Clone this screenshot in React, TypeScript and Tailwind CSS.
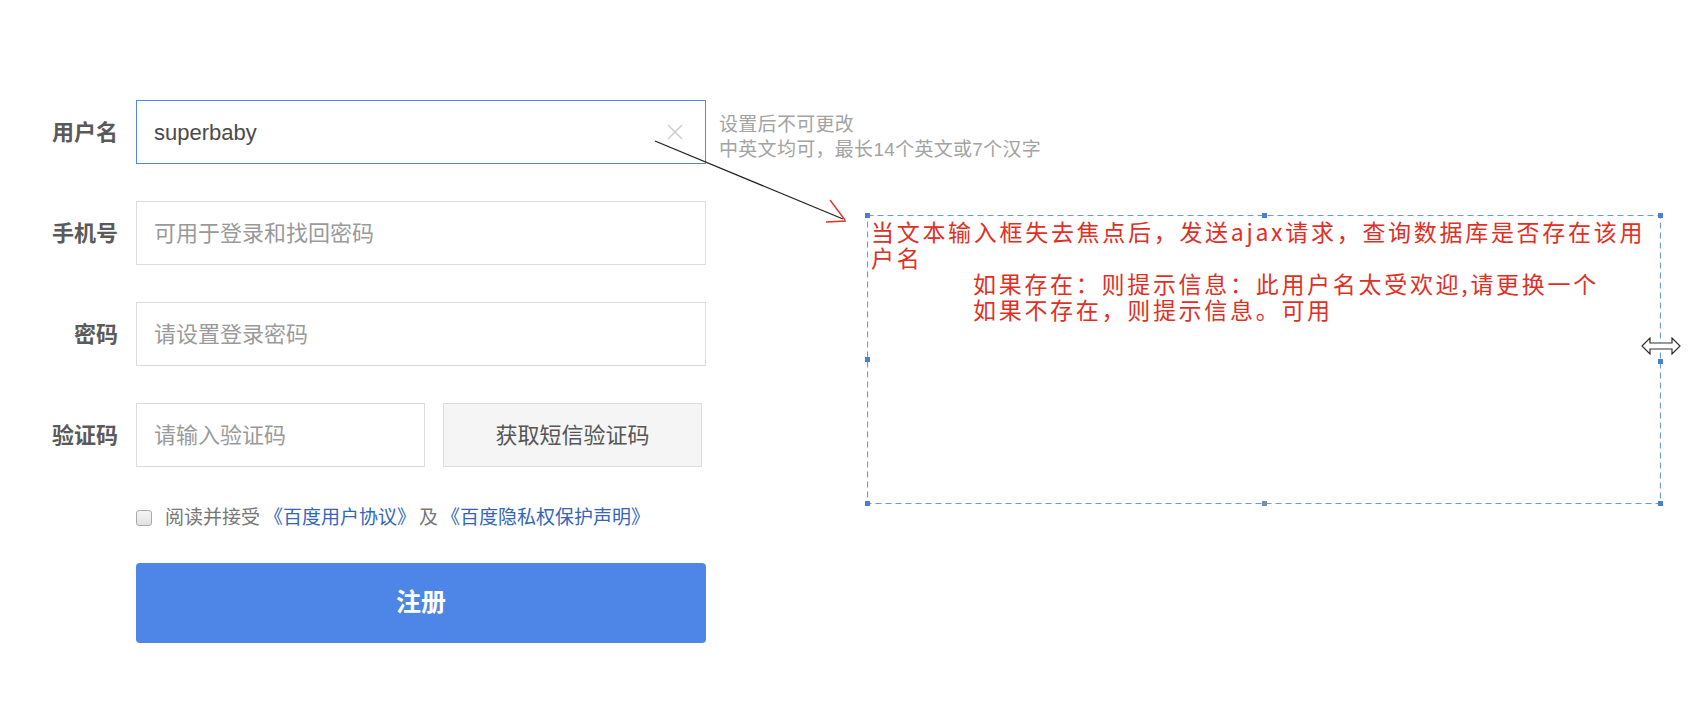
import React from "react";

function Label({ text }: { text: string }) {
  return (
    <div className="w-[68px] h-[64px] flex items-center justify-end text-[22px] font-bold text-[#5a5a5a] whitespace-nowrap">
      {text}
    </div>
  );
}

function Field({ placeholder, width = "w-[570px]" }: { placeholder: string; width?: string }) {
  return (
    <div className={`${width} h-[64px] border border-[#dcdcdc] bg-white flex items-center pl-[17px] text-[22px] text-[#9a9a9a] whitespace-nowrap`}>
      {placeholder}
    </div>
  );
}

export default function App() {
  return (
    <div className="relative w-[1701px] h-[720px] bg-white overflow-hidden font-['Liberation_Sans','Noto_Sans_CJK_SC',sans-serif]">
      <div className="flex pl-[50px] pt-[100px]">
        {/* form column */}
        <div className="w-[656px] flex flex-col">
          {/* username */}
          <div className="flex items-center gap-[18px]">
            <Label text="用户名" />
            <div className="w-[570px] h-[64px] border border-[#5189dc] bg-white flex items-center justify-between pl-[17px] pr-[20px] text-[22px] text-[#4a4a4a]">
              <span>superbaby</span>
              <svg width="20" height="20" viewBox="0 0 20 20">
                <path d="M3 3 L17 17 M17 3 L3 17" stroke="#cfcfcf" strokeWidth="1.6" fill="none" />
              </svg>
            </div>
          </div>
          {/* phone */}
          <div className="flex items-center gap-[18px] mt-[37px]">
            <Label text="手机号" />
            <Field placeholder="可用于登录和找回密码" />
          </div>
          {/* password */}
          <div className="flex items-center gap-[18px] mt-[37px]">
            <Label text="密码" />
            <Field placeholder="请设置登录密码" />
          </div>
          {/* verify */}
          <div className="flex items-center gap-[18px] mt-[37px]">
            <Label text="验证码" />
            <div className="flex items-center gap-[18px]">
              <Field placeholder="请输入验证码" width="w-[289px]" />
              <div className="w-[259px] h-[64px] border border-[#dcdcdc] bg-[#f5f5f5] flex items-center justify-center text-[22px] text-[#555]">
                获取短信验证码
              </div>
            </div>
          </div>
          {/* agreement */}
          <div className="flex items-center h-[24px] mt-[39px] pl-[86px] text-[19px] text-[#777] whitespace-nowrap">
            <div className="w-[16px] h-[16px] rounded-[3px] border border-[#a9a9a9] bg-gradient-to-b from-[#f4f4f4] to-[#e2e2e2] mr-[13px]" />
            <span>阅读并接受</span>
            <span className="text-[#3366bb] ml-[4px]">《百度用户协议》</span>
            <span className="mx-[3px]">及</span>
            <span className="text-[#3366bb]">《百度隐私权保护声明》</span>
          </div>
          {/* submit */}
          <div className="ml-[86px] mt-[33px] w-[570px] h-[80px] rounded-[4px] bg-[#4d86e6] flex items-center justify-center text-[25px] font-bold text-white">
            注册
          </div>
        </div>

        {/* right column */}
        <div className="ml-[13px] flex flex-col">
          <div className="mt-[12px] text-[19px] leading-[25px] tracking-[0.3px] text-[#a3a3a3] whitespace-nowrap">
            <div>设置后不可更改</div>
            <div>中英文均可，最长14个英文或7个汉字</div>
          </div>

          {/* annotation box */}
          <div className="relative ml-[148px] mt-[53px] w-[794px] h-[289px] pt-[3px] pl-[4px] text-[23px] leading-[26px] tracking-[2.7px] text-[#e12f26] font-['Noto_Sans_CJK_SC',sans-serif] whitespace-nowrap">
            <svg className="absolute inset-0 pointer-events-none" width="794" height="289">
              <rect x="0.5" y="0.5" width="793" height="288" fill="none" stroke="#6b9ae0" strokeWidth="1.2" strokeDasharray="6 4" />
            </svg>
            <div>当文本输入框失去焦点后，发送ajax请求，查询数据库是否存在该用</div>
            <div>户名</div>
            <div className="pl-[102px]">如果存在：则提示信息：此用户名太受欢迎,请更换一个</div>
            <div className="pl-[102px]">如果不存在，则提示信息。可用</div>
            {/* handles */}
            <div className="absolute left-[-2px] top-[-2px] w-[5px] h-[5px] bg-[#4a7fd4]" />
            <div className="absolute left-[395px] top-[-2px] w-[5px] h-[5px] bg-[#4a7fd4]" />
            <div className="absolute right-[-2px] top-[-2px] w-[5px] h-[5px] bg-[#4a7fd4]" />
            <div className="absolute left-[-2px] top-[142px] w-[5px] h-[5px] bg-[#4a7fd4]" />
            <div className="absolute right-[-2px] top-[144px] w-[5px] h-[5px] bg-[#4a7fd4]" />
            <div className="absolute left-[-2px] bottom-[-2px] w-[5px] h-[5px] bg-[#4a7fd4]" />
            <div className="absolute left-[395px] bottom-[-2px] w-[5px] h-[5px] bg-[#7a8fb0]" />
            <div className="absolute right-[-2px] bottom-[-2px] w-[5px] h-[5px] bg-[#4a7fd4]" />
            {/* resize cursor */}
            <svg className="absolute right-[-20px] top-[122px]" width="40" height="18" viewBox="0 0 40 18">
              <path d="M1 9 L9 1 L9 6 L31 6 L31 1 L39 9 L31 17 L31 12 L9 12 L9 17 Z" fill="#ffffff" stroke="#333" strokeWidth="1.2" strokeLinejoin="miter" />
            </svg>
          </div>
        </div>
      </div>

      {/* annotation arrow */}
      <svg className="absolute inset-0 pointer-events-none" width="1701" height="720">
        <line x1="655" y1="141" x2="843" y2="219" stroke="#222" strokeWidth="1.3" />
        <line x1="830" y1="200" x2="845" y2="220" stroke="#e3302a" strokeWidth="1.4" />
        <line x1="826" y1="222" x2="846" y2="221" stroke="#e3302a" strokeWidth="1.4" />
      </svg>
    </div>
  );
}
